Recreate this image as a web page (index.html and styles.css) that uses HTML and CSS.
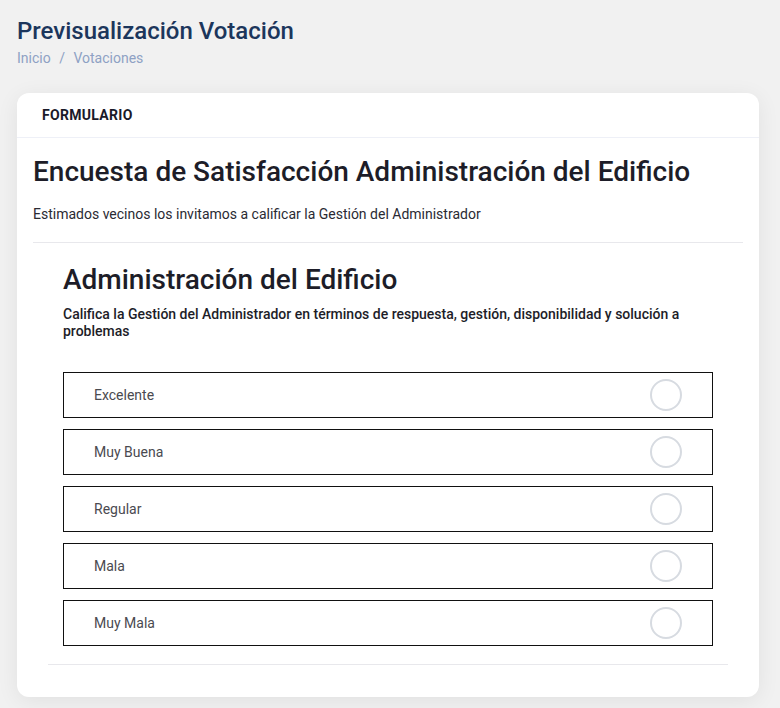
FILE: index.html
```html
<!DOCTYPE html>
<html lang="es">
<head>
    <meta charset="UTF-8">
    <meta name="viewport" content="width=device-width, initial-scale=1.0">
    <title>Previsualización Votación</title>
    <link rel="stylesheet" href="styles.css">
</head>
<body>
    <div class="page">
        <div class="page-header">
            <h1>Previsualización Votación</h1>
            <nav class="breadcrumb">
                <a href="#">Inicio</a>
                <span class="sep">/</span>
                <a href="#">Votaciones</a>
            </nav>
        </div>

        <div class="card">
            <div class="card-header">FORMULARIO</div>
            <div class="card-body">
                <h2 class="survey-title">Encuesta de Satisfacción Administración del Edificio</h2>
                <p class="survey-desc">Estimados vecinos los invitamos a calificar la Gestión del Administrador</p>
                <hr class="divider">

                <div class="question">
                    <h3>Administración del Edificio</h3>
                    <p class="question-text">Califica la Gestión del Administrador en términos de respuesta, gestión, disponibilidad y solución a problemas</p>

                    <div class="options">
                        <label class="option">
                            <span>Excelente</span>
                            <input type="radio" name="q1" value="5">
                        </label>
                        <label class="option">
                            <span>Muy Buena</span>
                            <input type="radio" name="q1" value="4">
                        </label>
                        <label class="option">
                            <span>Regular</span>
                            <input type="radio" name="q1" value="3">
                        </label>
                        <label class="option">
                            <span>Mala</span>
                            <input type="radio" name="q1" value="2">
                        </label>
                        <label class="option">
                            <span>Muy Mala</span>
                            <input type="radio" name="q1" value="1">
                        </label>
                    </div>
                    <hr class="divider bottom">
                </div>
            </div>
        </div>
    </div>
</body>
</html>
```

FILE: styles.css
```css
:root {
    --title-color: #1c365c;
    --crumb-color: #8ea1c4;
    --text-color: #1d1d28;
    --line-color: #e8e8ec;
}

body {
    font-family: Roboto, "Liberation Sans", sans-serif;
    margin: 0;
    padding: 0;
    background-color: #f1f1f1;
    color: var(--text-color);
}

.page {
    padding: 17px 21px 12px 17px;
}

.page-header h1 {
    margin: 0;
    font-size: 24px;
    font-weight: 500;
    line-height: 28px;
    color: var(--title-color);
}

.breadcrumb {
    margin-top: 5px;
    font-size: 14px;
    line-height: 16px;
    color: var(--crumb-color);
}

.breadcrumb a {
    color: var(--crumb-color);
    text-decoration: none;
}

.breadcrumb .sep {
    margin: 0 5px;
}

.card {
    margin-top: 27px;
    background-color: #fff;
    border-radius: 12px;
    box-shadow: 0 4px 22px rgba(0, 0, 0, 0.07);
}

.card-header {
    height: 45px;
    box-sizing: border-box;
    display: flex;
    align-items: center;
    padding: 0 25px;
    font-size: 14px;
    font-weight: 700;
    letter-spacing: 0.3px;
    color: #1a1a2a;
    border-bottom: 1px solid #eef0f7;
}

.card-body {
    padding: 17px 16px 32px;
}

.survey-title {
    margin: 0;
    font-size: 28px;
    font-weight: 500;
    line-height: 34px;
    color: #1d1d28;
}

.survey-desc {
    margin: 15px 0 0;
    font-size: 14px;
    line-height: 21px;
    color: #2a2a33;
}

.divider {
    border: none;
    border-top: 1px solid var(--line-color);
    margin: 17px 0 0;
}

.question {
    padding: 0 15px;
}

.question h3 {
    margin: 20px 0 0;
    padding: 0 15px;
    font-size: 28px;
    font-weight: 500;
    line-height: 33px;
    color: #1d1d28;
}

.question-text {
    margin: 10px 0 0;
    padding: 0 15px;
    font-size: 14px;
    font-weight: 500;
    line-height: 17px;
    color: #1d1d28;
}

.options {
    margin: 32px 15px 0;
    display: flex;
    flex-direction: column;
    gap: 11px;
}

.option {
    height: 46px;
    box-sizing: border-box;
    border: 1px solid #111;
    display: flex;
    align-items: center;
    justify-content: space-between;
    padding: 0 30px;
    font-size: 14px;
    color: #4a4a50;
    cursor: pointer;
}

.option input {
    appearance: none;
    -webkit-appearance: none;
    margin: 0;
    width: 32px;
    height: 32px;
    border: 2px solid #d7dbe1;
    border-radius: 50%;
    cursor: pointer;
}

.option input:checked {
    border-color: #1c365c;
    background: radial-gradient(circle, #1c365c 6px, transparent 7px);
}

.divider.bottom {
    margin-top: 18px;
}
```
